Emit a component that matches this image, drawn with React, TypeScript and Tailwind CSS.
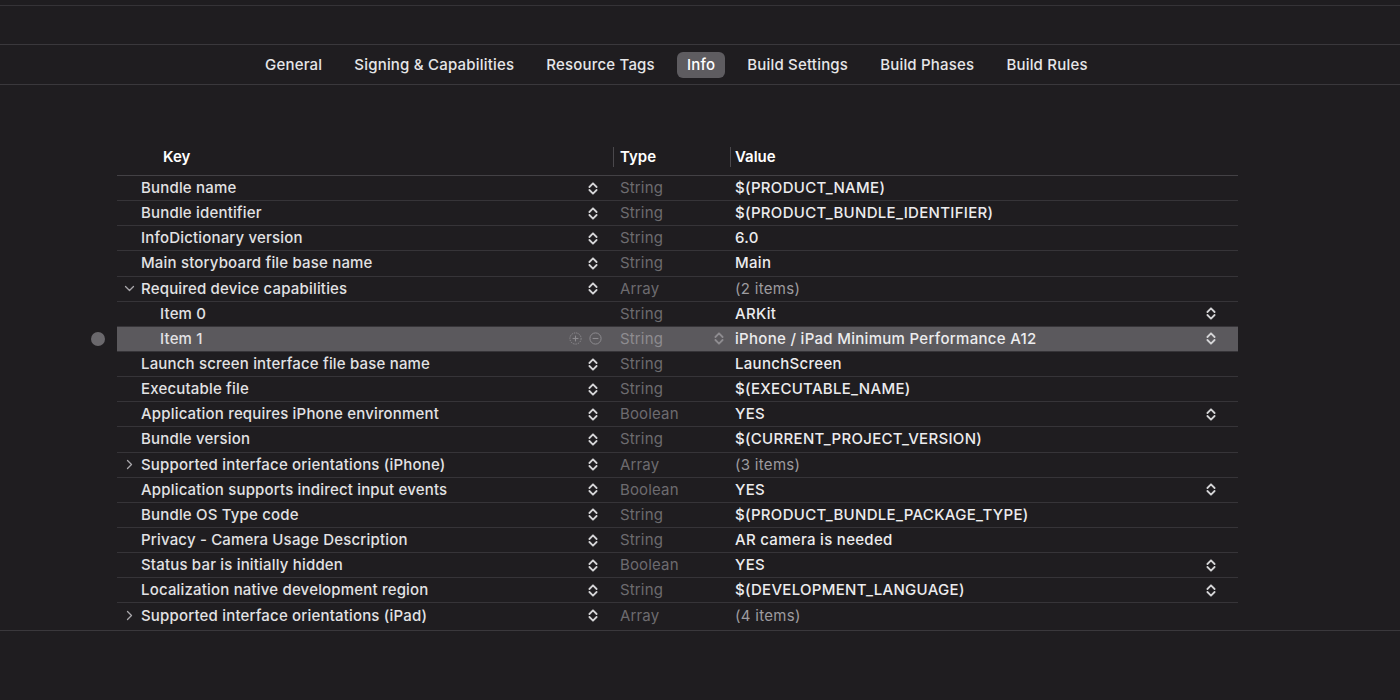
import React from "react";

type Row = {
  key: string;
  type: string;
  value: string;
  indent?: boolean;
  disclosure?: "down" | "right";
  keyStepper?: boolean;
  valueStepper?: boolean;
  muted?: boolean;
  selected?: boolean;
};

const rows: Row[] = [
  { key: "Bundle name", type: "String", value: "$(PRODUCT_NAME)", keyStepper: true },
  { key: "Bundle identifier", type: "String", value: "$(PRODUCT_BUNDLE_IDENTIFIER)", keyStepper: true },
  { key: "InfoDictionary version", type: "String", value: "6.0", keyStepper: true },
  { key: "Main storyboard file base name", type: "String", value: "Main", keyStepper: true },
  { key: "Required device capabilities", type: "Array", value: "(2 items)", keyStepper: true, disclosure: "down", muted: true },
  { key: "Item 0", type: "String", value: "ARKit", indent: true, valueStepper: true },
  { key: "Item 1", type: "String", value: "iPhone / iPad Minimum Performance A12", indent: true, valueStepper: true, selected: true },
  { key: "Launch screen interface file base name", type: "String", value: "LaunchScreen", keyStepper: true },
  { key: "Executable file", type: "String", value: "$(EXECUTABLE_NAME)", keyStepper: true },
  { key: "Application requires iPhone environment", type: "Boolean", value: "YES", keyStepper: true, valueStepper: true },
  { key: "Bundle version", type: "String", value: "$(CURRENT_PROJECT_VERSION)", keyStepper: true },
  { key: "Supported interface orientations (iPhone)", type: "Array", value: "(3 items)", keyStepper: true, disclosure: "right", muted: true },
  { key: "Application supports indirect input events", type: "Boolean", value: "YES", keyStepper: true, valueStepper: true },
  { key: "Bundle OS Type code", type: "String", value: "$(PRODUCT_BUNDLE_PACKAGE_TYPE)", keyStepper: true },
  { key: "Privacy - Camera Usage Description", type: "String", value: "AR camera is needed", keyStepper: true },
  { key: "Status bar is initially hidden", type: "Boolean", value: "YES", keyStepper: true, valueStepper: true },
  { key: "Localization native development region", type: "String", value: "$(DEVELOPMENT_LANGUAGE)", keyStepper: true, valueStepper: true },
  { key: "Supported interface orientations (iPad)", type: "Array", value: "(4 items)", keyStepper: true, disclosure: "right", muted: true },
];

const tabs = ["General", "Signing & Capabilities", "Resource Tags", "Info", "Build Settings", "Build Phases", "Build Rules"];

function Stepper({ color = "#d4d4d6" }: { color?: string }) {
  return (
    <svg width="10" height="15" viewBox="0 0 10 15" fill="none">
      <polyline points="1.4,6 5,2.3 8.6,6" stroke={color} strokeWidth="1.8" strokeLinecap="round" strokeLinejoin="round" />
      <polyline points="1.4,9 5,12.7 8.6,9" stroke={color} strokeWidth="1.8" strokeLinecap="round" strokeLinejoin="round" />
    </svg>
  );
}

function Chevron({ dir }: { dir: "down" | "right" }) {
  return dir === "down" ? (
    <svg width="11" height="11" viewBox="0 0 11 11" fill="none">
      <polyline points="1.5,3.5 5.5,7.5 9.5,3.5" stroke="#a9a7ab" strokeWidth="1.3" strokeLinecap="round" strokeLinejoin="round" />
    </svg>
  ) : (
    <svg width="11" height="11" viewBox="0 0 11 11" fill="none">
      <polyline points="3.5,1.5 7.5,5.5 3.5,9.5" stroke="#a9a7ab" strokeWidth="1.3" strokeLinecap="round" strokeLinejoin="round" />
    </svg>
  );
}

function CircleIcon({ kind }: { kind: "plus" | "minus" }) {
  return (
    <svg width="13" height="13" viewBox="0 0 13 13" fill="none">
      <circle cx="6.5" cy="6.5" r="5.6" stroke="#8d8b8f" strokeWidth="1" strokeDasharray={kind === "plus" ? "1.4 1" : undefined} />
      <line x1="3.6" y1="6.5" x2="9.4" y2="6.5" stroke="#8d8b8f" strokeWidth="1.1" />
      {kind === "plus" && <line x1="6.5" y1="3.6" x2="6.5" y2="9.4" stroke="#8d8b8f" strokeWidth="1.1" />}
    </svg>
  );
}

export default function App() {
  return (
    <div
      className="w-[1400px] h-[700px] overflow-hidden bg-[#1f1d20] flex flex-col text-[15px] leading-[20px] antialiased"
      style={{ fontFamily: "Inter, 'Noto Sans', 'Liberation Sans', sans-serif" }}
    >
      <div className="h-[6px] border-b border-[#353337]" />
      <div className="h-[39px] border-b border-[#3a383c]" />
      {/* Tabs */}
      <div className="h-[40px] border-b border-[#3a383c] flex items-center pl-[255px] gap-[12px]">
        {tabs.map((t) => (
          <div
            key={t}
            className={
              t === "Info"
                ? "h-[26px] px-[10px] rounded-[6px] bg-[#5e5c60] text-white font-medium tracking-[0.2px] flex items-center"
                : "h-[26px] px-[10px] text-[#e6e6e8] font-medium tracking-[0.2px] flex items-center"
            }
          >
            {t}
          </div>
        ))}
      </div>

      <div className="h-[60px]" />

      {/* Table wrapper */}
      <div className="border-b border-[#3a383c] pb-[1px]">
        <div className="ml-[84px] w-[1154px]">
          {/* Header */}
          <div className="flex h-[31px]">
            <div className="w-[33px]" />
            <div className="flex-1 flex border-b border-[#434145]">
              <div className="w-[496px] pl-[46px] pt-[2px] text-white font-semibold">Key</div>
              <div className="w-[117px] flex items-start pt-[2px]">
                <div className="w-px h-[20px] bg-[#4a484c]" />
                <span className="pl-[6px] text-white font-semibold">Type</span>
              </div>
              <div className="flex-1 flex items-start pt-[2px]">
                <div className="w-px h-[20px] bg-[#4a484c]" />
                <span className="pl-[4px] text-white font-semibold">Value</span>
              </div>
            </div>
          </div>

          {/* Rows */}
          {rows.map((r, i) => {
            const last = i === rows.length - 1;
            return (
              <div key={r.key} className="flex h-[25.15px]">
                <div className="w-[33px] flex items-center pl-[7px]">
                  {r.selected && <div className="w-[14px] h-[14px] rounded-full bg-[#6a686c]" />}
                </div>
                <div
                  className={
                    "flex-1 flex items-stretch " +
                    (last ? "" : "border-b border-[#363438] ") +
                    (r.selected ? "bg-[#5b595d]" : "")
                  }
                >
                  {/* Key */}
                  <div className="w-[496px] flex items-center">
                    <div className="w-[24px] flex items-center justify-center pl-[1px]">
                      {r.disclosure && <Chevron dir={r.disclosure} />}
                    </div>
                    <div
                      className={
                        "flex-1 text-[#e2e2e4] font-medium tracking-[0.18px] whitespace-nowrap " +
                        (r.indent ? "pl-[19px]" : "")
                      }
                    >
                      {r.key}
                    </div>
                    {r.keyStepper && (
                      <div className="mr-[15px] flex items-center">
                        <Stepper />
                      </div>
                    )}
                    {r.selected && (
                      <div className="mr-[11px] flex items-center gap-[7px]">
                        <CircleIcon kind="plus" />
                        <CircleIcon kind="minus" />
                      </div>
                    )}
                  </div>
                  {/* Type */}
                  <div className="w-[117px] flex items-center">
                    <div
                      className={
                        "flex-1 pl-[7px] tracking-[0.15px] " + (r.selected ? "text-[#8e8c90]" : "text-[#6d6b6f]")
                      }
                    >
                      {r.type}
                    </div>
                    {r.selected && (
                      <div className="mr-[6px] flex items-center">
                        <Stepper color="#8e8c90" />
                      </div>
                    )}
                  </div>
                  {/* Value */}
                  <div className="flex-1 flex items-center">
                    <div
                      className={
                        "flex-1 pl-[5px] whitespace-nowrap tracking-[0.3px] " +
                        (r.muted ? "text-[#9d9b9f]" : "text-[#ececee] font-medium")
                      }
                    >
                      {r.value}
                    </div>
                    {r.valueStepper && (
                      <div className="mr-[22px] flex items-center">
                        <Stepper />
                      </div>
                    )}
                  </div>
                </div>
              </div>
            );
          })}
        </div>
      </div>
    </div>
  );
}
